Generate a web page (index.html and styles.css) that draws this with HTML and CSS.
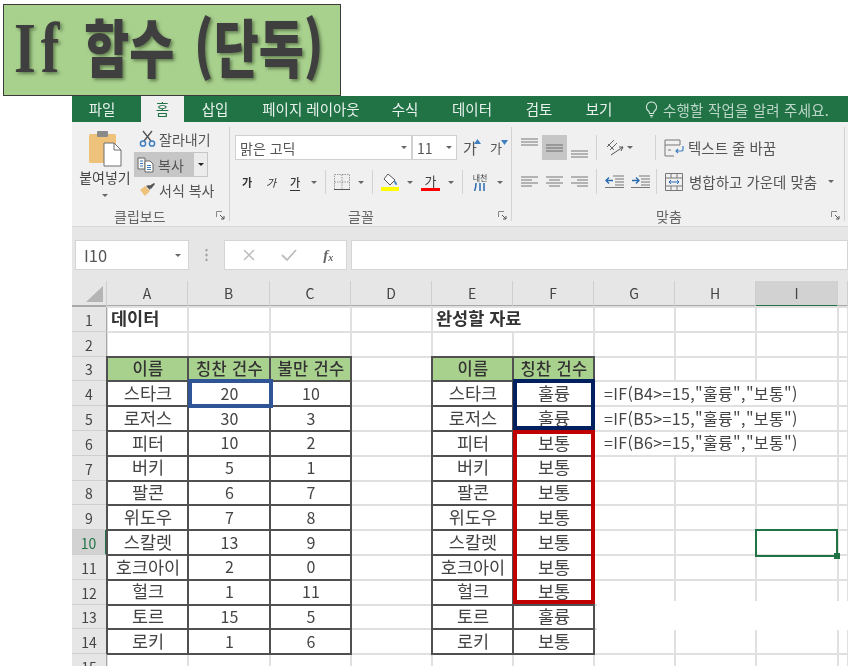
FILE: index.html
```html
<!DOCTYPE html>
<html lang="ko">
<head>
<meta charset="utf-8">
<title>If 함수 (단독)</title>
<link rel="stylesheet" href="styles.css">
</head>
<body>
<h1 class="title"><span class="title-text"><span class="title-if">If</span> 함수 (단독)</span></h1>
<main class="excel">
  <nav class="tabs">
    <span class="tab t-file">파일</span>
    <span class="tab t-home">홈</span>
    <span class="tab t-ins">삽입</span>
    <span class="tab t-page">페이지 레이아웃</span>
    <span class="tab t-form">수식</span>
    <span class="tab t-data">데이터</span>
    <span class="tab t-rev">검토</span>
    <span class="tab t-view">보기</span>
    <svg class="bulb" width="13" height="17" viewBox="0 0 13 17"><path d="M6.5 1a5 5 0 0 0-3 9c.7.6 1 1.4 1 2.5h4c0-1.1.3-1.900 1-2.500a5 5 0 0 0-3-9zM4.800 14.500h3.400M5.500 16h2" fill="none" stroke="#d6e6dc" stroke-width="1.100"/></svg>
    <span class="hint">수행할 작업을 알려 주세요.</span>
  </nav>

  <section class="ribbon">
    <div class="group g-clip">
      <div class="body clip-body">
        <div class="paste">
          <svg width="34" height="37" viewBox="0 0 34 37"><rect x="1" y="4" width="27" height="29" rx="1.500" fill="#eec27a"/><rect x="9" y="1" width="11" height="6" rx="1" fill="#8a8a8a"/><path d="M16 13h10l7 7v16H16z" fill="#fff" stroke="#6e6e6e"/><path d="M26 13v7h7" fill="none" stroke="#6e6e6e"/></svg>
          <span class="paste-label">붙여넣기</span>
          <i class="arrow"></i>
        </div>
        <div class="clip-list">
          <div class="clip-row">
            <svg width="17" height="17" viewBox="0 0 17 17"><path d="M4 1l8 10M13 1L5 11" stroke="#555" stroke-width="1.400" fill="none"/><circle cx="4" cy="13.500" r="2.600" fill="none" stroke="#3f7fc0" stroke-width="1.500"/><circle cx="13" cy="13.500" r="2.600" fill="none" stroke="#3f7fc0" stroke-width="1.500"/></svg>
            <span>잘라내기</span>
          </div>
          <div class="clip-row copy">
            <div class="copy-main">
              <svg width="18" height="16" viewBox="0 0 18 16"><path d="M1 1h7v11H1z" fill="#f4f4f4" stroke="#666"/><path d="M8 4h5l3 3v8H8z" fill="#fff" stroke="#666"/><path d="M3 4h3M3 6.500h3M3 9h3" stroke="#3f7fc0"/><path d="M10 8.500h4M10 10.500h4M10 12.500h4" stroke="#3f7fc0"/></svg>
              <span>복사</span>
            </div>
            <div class="copy-drop"><i class="arrow dark"></i></div>
          </div>
          <div class="clip-row">
            <svg width="17" height="15" viewBox="0 0 17 15"><path d="M1 8l5-4 5 5-5 5z" fill="#eec27a"/><path d="M7 4l3-1 2 2-1 3z" fill="#555"/><path d="M10 4l5-3 1 1-4 5z" fill="#555"/></svg>
            <span>서식 복사</span>
          </div>
        </div>
      </div>
      <footer class="foot foot-clip"><span></span><span>클립보드</span><svg class="launch" width="9" height="9" viewBox="0 0 9 9"><path d="M.5 6V.5H6" fill="none" stroke="#888"/><path d="M4 4l4 4M8 5v3H5" fill="none" stroke="#555"/></svg></footer>
    </div>
    <i class="gsep"></i>

    <div class="group g-font">
      <div class="body font-body">
        <div class="row font-row1">
          <div class="field fname"><span class="fname-text">맑은 고딕</span><i class="arrow"></i></div>
          <div class="field fsize"><span class="fsize-text">11</span><i class="arrow"></i></div>
          <span class="grow">가<svg class="caret" width="7" height="5" viewBox="0 0 7 5"><path d="M3.500 0L7 5H0z" fill="#3f7fc0"/></svg></span>
          <span class="grow small">가<svg class="caret" width="7" height="5" viewBox="0 0 7 5"><path d="M0 0h7L3.500 5z" fill="#3f7fc0"/></svg></span>
        </div>
        <div class="row font-row2">
          <b class="ga">가</b>
          <em class="ga">가</em>
          <u class="ga">가</u>
          <i class="arrow"></i>
          <i class="vsep"></i>
          <svg width="16" height="16" viewBox="0 0 16 16"><path d="M.5.500h15v15H.5z" fill="none" stroke="#999" stroke-dasharray="1.500 1"/><path d="M.5 8h15M8 .5v15" stroke="#999" stroke-dasharray="1.500 1"/><path d="M0 15.500h16" stroke="#555"/></svg>
          <i class="arrow"></i>
          <i class="vsep"></i>
          <svg width="18" height="18" viewBox="0 0 18 18"><path d="M7 1l7 6-5 5-6-6z" fill="#fff" stroke="#555"/><path d="M13 7c2 1 3 3 3 5-2 0-3-2-3-5z" fill="#3f7fc0"/><rect y="14" width="18" height="4" fill="#ffff00"/></svg>
          <i class="arrow"></i>
          <span class="fcolor">가<i class="redbar"></i></span>
          <i class="arrow"></i>
          <i class="vsep"></i>
          <span class="phon">내천<svg width="12" height="8" viewBox="0 0 12 8"><path d="M2 0c0 3-.5 6-1.500 8M6 0v8M10 0v8" fill="none" stroke="#2b6cb0" stroke-width="1.500"/></svg></span>
          <i class="arrow"></i>
        </div>
      </div>
      <footer class="foot foot-font"><span></span><span>글꼴</span><svg class="launch" width="9" height="9" viewBox="0 0 9 9"><path d="M.5 6V.5H6" fill="none" stroke="#888"/><path d="M4 4l4 4M8 5v3H5" fill="none" stroke="#555"/></svg></footer>
    </div>
    <i class="gsep"></i>

    <div class="group g-align">
      <div class="body align-body">
        <div class="row align-row1">
          <svg class="a-top" width="17" height="8" viewBox="0 0 17 8"><path d="M0 1h17M0 4h17M0 7h17" stroke="#777"/></svg>
          <span class="a-mid"><svg width="17" height="8" viewBox="0 0 17 8"><path d="M0 1h17M0 4h17M0 7h17" stroke="#6a6a6a"/></svg></span>
          <svg class="a-bot" width="17" height="8" viewBox="0 0 17 8"><path d="M0 1h17M0 4h17M0 7h17" stroke="#777"/></svg>
          <i class="vsep"></i>
          <svg class="orient" width="20" height="18" viewBox="0 0 20 18"><path d="M2 8l7-7M5 11l7-7M3 5l6 6" stroke="#666" fill="none"/><path d="M6 16l12-8M18 8l-4 0M18 8l-2 4" stroke="#555" fill="none"/></svg>
          <i class="arrow"></i>
          <i class="vsep sep-right"></i>
          <svg class="wrap-ico" width="20" height="18" viewBox="0 0 20 18"><path d="M1 1h15v5H1zM1 6v11h9M4 11h3" fill="none" stroke="#777"/><path d="M19 7v4c0 1-1 1-2 1h-5M14 10l-2 2 2 2" fill="none" stroke="#3f7fc0" stroke-width="1.200"/></svg>
          <span class="a-text">텍스트 줄 바꿈</span>
        </div>
        <div class="row align-row2">
          <svg width="17" height="12" viewBox="0 0 17 12"><path d="M0 1h17M0 4h11M0 7h17M0 10h11" stroke="#777"/></svg>
          <svg class="m8" width="17" height="12" viewBox="0 0 17 12"><path d="M0 1h17M3 4h11M0 7h17M3 10h11" stroke="#777"/></svg>
          <svg class="m8" width="17" height="12" viewBox="0 0 17 12"><path d="M0 1h17M6 4h11M0 7h17M6 10h11" stroke="#777"/></svg>
          <i class="vsep m8"></i>
          <svg class="m8" width="19" height="13" viewBox="0 0 19 13"><path d="M8 1h11M10 4h9M10 7h9M10 10h9M0 12.500h19" stroke="#777"/><path d="M8 5.500H1M4 2.500l-3 3 3 3" fill="none" stroke="#2b6cb0" stroke-width="1.400"/></svg>
          <svg class="m7" width="19" height="13" viewBox="0 0 19 13"><path d="M8 1h11M10 4h9M10 7h9M10 10h9M0 12.500h19" stroke="#777"/><path d="M1 5.500h7M5 2.500l3 3-3 3" fill="none" stroke="#2b6cb0" stroke-width="1.400"/></svg>
          <i class="vsep m6"></i>
          <svg class="m8" width="18" height="18" viewBox="0 0 18 18"><path d="M.5.500h17v17H.5zM.5 5h17M.5 13h17M6 .5V5M12 .5V5M6 13v4.500M12 13v4.500" fill="none" stroke="#777"/><path d="M4 9h10M6 7L4 9l2 2M12 7l2 2-2 2" fill="none" stroke="#2b6cb0"/></svg>
          <span class="a-text merge">병합하고 가운데 맞춤</span>
          <i class="arrow merge-arrow"></i>
        </div>
      </div>
      <footer class="foot foot-align"><span></span><span>맞춤</span><svg class="launch" width="9" height="9" viewBox="0 0 9 9"><path d="M.5 6V.5H6" fill="none" stroke="#888"/><path d="M4 4l4 4M8 5v3H5" fill="none" stroke="#555"/></svg></footer>
    </div>
    <i class="gsep"></i>
  </section>

  <section class="fbar">
    <div class="namebox"><span>I10</span><i class="arrow"></i></div>
    <div class="dots"></div>
    <div class="fbtns">
      <svg width="14" height="14" viewBox="0 0 14 14"><path d="M2 2l10 10M12 2L2 12" stroke="#bdbdbd" stroke-width="1.500"/></svg>
      <svg width="16" height="14" viewBox="0 0 16 14"><path d="M1 7l5 5L15 2" fill="none" stroke="#bdbdbd" stroke-width="1.800"/></svg>
      <span class="fx">f<sub>x</sub></span>
    </div>
    <div class="finput"></div>
  </section>

  <section class="sheet">
    <div class="hd corner"><svg width="17" height="16" viewBox="0 0 17 16"><path d="M17 0v16H0z" fill="#b4b4b4"/></svg></div><div class="hd">A</div><div class="hd">B</div><div class="hd">C</div><div class="hd">D</div><div class="hd">E</div><div class="hd">F</div><div class="hd">G</div><div class="hd">H</div><div class="hd sel-col">I</div><div class="hd"></div>

    <div class="rn">1</div><div class="c hb">데이터</div><div class="c"></div><div class="c"></div><div class="c"></div><div class="c hb span2">완성할 자료</div><div class="c"></div><div class="c"></div><div class="c"></div><div class="c"></div>

    <div class="rn">2</div><div class="c"></div><div class="c"></div><div class="c"></div><div class="c"></div><div class="c"></div><div class="c"></div><div class="c"></div><div class="c"></div><div class="c"></div><div class="c"></div>

    <div class="rn">3</div><div class="c t th">이름</div><div class="c t th">칭찬 건수</div><div class="c t th">불만 건수</div><div class="c"></div><div class="c t th">이름</div><div class="c t th">칭찬 건수</div><div class="c"></div><div class="c"></div><div class="c"></div><div class="c"></div>

    <div class="rn">4</div><div class="c t">스타크</div><div class="c t n">20</div><div class="c t n">10</div><div class="c"></div><div class="c t">스타크</div><div class="c t">훌륭</div><div class="c fm">=IF(B4&gt;=15,"훌륭","보통")</div><div class="c"></div>

    <div class="rn">5</div><div class="c t">로저스</div><div class="c t n">30</div><div class="c t n">3</div><div class="c"></div><div class="c t">로저스</div><div class="c t">훌륭</div><div class="c fm">=IF(B5&gt;=15,"훌륭","보통")</div><div class="c"></div>

    <div class="rn">6</div><div class="c t">피터</div><div class="c t n">10</div><div class="c t n">2</div><div class="c"></div><div class="c t">피터</div><div class="c t">보통</div><div class="c fm">=IF(B6&gt;=15,"훌륭","보통")</div><div class="c"></div>

    <div class="rn">7</div><div class="c t">버키</div><div class="c t n">5</div><div class="c t n">1</div><div class="c"></div><div class="c t">버키</div><div class="c t">보통</div><div class="c"></div><div class="c"></div><div class="c"></div><div class="c"></div>

    <div class="rn">8</div><div class="c t">팔콘</div><div class="c t n">6</div><div class="c t n">7</div><div class="c"></div><div class="c t">팔콘</div><div class="c t">보통</div><div class="c"></div><div class="c"></div><div class="c"></div><div class="c"></div>

    <div class="rn">9</div><div class="c t">위도우</div><div class="c t n">7</div><div class="c t n">8</div><div class="c"></div><div class="c t">위도우</div><div class="c t">보통</div><div class="c"></div><div class="c"></div><div class="c"></div><div class="c"></div>

    <div class="rn sel-row">10</div><div class="c t">스칼렛</div><div class="c t n">13</div><div class="c t n">9</div><div class="c"></div><div class="c t">스칼렛</div><div class="c t">보통</div><div class="c"></div><div class="c"></div><div class="c"></div><div class="c"></div>

    <div class="rn">11</div><div class="c t">호크아이</div><div class="c t n">2</div><div class="c t n">0</div><div class="c"></div><div class="c t">호크아이</div><div class="c t">보통</div><div class="c"></div><div class="c"></div><div class="c"></div><div class="c"></div>

    <div class="rn">12</div><div class="c t">헐크</div><div class="c t n">1</div><div class="c t n">11</div><div class="c"></div><div class="c t">헐크</div><div class="c t">보통</div><div class="c"></div><div class="c"></div><div class="c"></div><div class="c"></div>

    <div class="rn">13</div><div class="c t">토르</div><div class="c t n">15</div><div class="c t n">5</div><div class="c"></div><div class="c t">토르</div><div class="c t">훌륭</div><div class="c"></div><div class="c"></div><div class="c"></div><div class="c"></div>

    <div class="rn">14</div><div class="c t">로키</div><div class="c t n">1</div><div class="c t n">6</div><div class="c"></div><div class="c t">로키</div><div class="c t">보통</div><div class="c"></div><div class="c"></div><div class="c"></div><div class="c"></div>

    <div class="rn">15</div><div class="c"></div><div class="c"></div><div class="c"></div><div class="c"></div><div class="c"></div><div class="c"></div><div class="c"></div><div class="c"></div><div class="c"></div><div class="c"></div>

    <div class="mark mark-blue"></div>
    <div class="mark mark-navy"></div>
    <div class="mark mark-red"></div>
    <div class="mark mark-sel"><i class="handle"></i></div>
    <div class="mark patch"></div>
  </section>
</main>
</body>
</html>
```

FILE: styles.css
```css
* { box-sizing: border-box; }
html, body { margin: 0; padding: 0; background: #fff; }
body {
  width: 855px;
  height: 669px;
  overflow: hidden;
  font-family: "Noto Sans CJK KR", "Noto Sans", sans-serif;
  color: #444;
}

/* title */
.title {
  margin: 4px 0 0 3px;
  width: 338px;
  height: 92px;
  background: #a9d18e;
  border: 1px solid #3a3a3a;
  color: #3f3f3f;
  font-size: 49px;
  font-weight: 900;
  line-height: 80px;
  padding-left: 10px;
  white-space: nowrap;
  word-spacing: 6px;
  filter: blur(.6px);
}
.title-text {
  display: inline-block;
  transform: scaleY(1.28);
  transform-origin: 50% 50%;
  text-shadow: 2px 2px 3px rgba(40, 60, 30, .55);
}
.title-if { font-family: "Liberation Serif", serif; font-weight: 700; font-size: 56px; letter-spacing: 5px; }

.excel {
  margin-left: 72px;
  width: 776px;
  filter: blur(.45px);
  font-size: 14px;
}

/* tabs */
.tabs {
  display: flex;
  align-items: center;
  height: 26px;
  background: #217346;
  color: #e8f1ec;
  font-size: 14.500px;
  white-space: nowrap;
}
.tab { text-align: center; line-height: 26px; height: 26px; }
.t-file { width: 69px; padding-right: 9px; }
.t-home { width: 43px; background: #f0f0f0; color: #217346; }
.t-ins { width: 62px; }
.t-page { width: 130px; }
.t-form { width: 60px; padding-right: 2px; }
.t-data { width: 72px; }
.t-rev { width: 62px; }
.t-view { width: 58px; }
.bulb { margin-left: 17px; }
.hint { margin-left: 5px; color: #bcd6c8; font-size: 14.500px; letter-spacing: .2px; }

/* ribbon */
.ribbon {
  display: flex;
  height: 105px;
  background: #f0f0f0;
  border-bottom: 1px solid #d9d9d9;
}
.group { display: flex; flex-direction: column; }
.g-clip { width: 157px; }
.g-font { width: 281px; }
.g-align { width: 332px; }
.gsep { width: 1px; margin: 5px 0; background: #d2d2d2; }
.body { flex: 1; }
.foot {
  display: grid;
  align-items: center;
  height: 21px;
  color: #666;
  font-size: 14px;
}
.foot-clip { grid-template-columns: 42px auto 1fr; }
.foot-font { grid-template-columns: 118px auto 1fr; }
.foot-align { grid-template-columns: 144px auto 1fr; }
.launch { justify-self: end; margin-right: 4px; }
.arrow {
  display: inline-block;
  width: 0;
  height: 0;
  border: 3px solid transparent;
  border-top: 3px solid #666;
  border-bottom: 0;
  flex: none;
}
.arrow.dark { border-top-color: #222; }
.vsep { display: block; width: 1px; height: 25px; background: #d2d2d2; flex: none; }
.row { display: flex; align-items: center; }

/* clipboard */
.clip-body { display: flex; padding: 4px 0 0 4px; }
.paste { width: 58px; display: flex; flex-direction: column; align-items: center; }
.paste svg { margin: 4px 0 0 0; }
.paste-label { margin-top: -1px; line-height: 22px; font-size: 14px; white-space: nowrap; }
.paste .arrow { margin-top: 6px; }
.clip-list { display: flex; flex-direction: column; }
.clip-row { display: flex; align-items: center; gap: 3px; height: 25px; width: 82px; padding-left: 5px; white-space: nowrap; color: #555; }
.copy { padding: 0; gap: 0; width: 74px; margin-top: 1px; background: #f0f0f0; }
.copy-main { display: flex; align-items: center; gap: 3px; width: 59px; height: 25px; padding-left: 3px; background: #c6c6c6; }
.copy-drop { display: flex; align-items: center; justify-content: center; width: 15px; height: 25px; border: 1px solid #c6c6c6; background: #ececec; }

/* font */
.font-body { padding: 13px 0 0 5px; }
.field {
  display: flex;
  align-items: center;
  justify-content: space-between;
  height: 25px;
  background: #fff;
  border: 1px solid #d0d0d0;
  font-size: 14px;
  padding: 0 4px;
}
.fname { width: 177px; }
.fname-text, .fsize-text { color: #555; }
.fsize { width: 45px; }
.grow { position: relative; margin-left: 6px; width: 20px; font-size: 15px; color: #555; text-align: left; }
.grow.small { margin-left: 7px; font-size: 13px; }
.caret { position: absolute; left: 11px; top: 2px; }
.font-row2 { margin: 10px 0 0 4px; width: 264px; justify-content: space-between; height: 24px; }
.font-row2 .vsep { height: 24px; }
.ga { width: 16px; text-align: center; font-size: 11px; color: #333; }
b.ga { font-weight: 700; }
em.ga { font-style: italic; }
u.ga { font-weight: 500; text-underline-offset: 3px; }
.fcolor { position: relative; width: 19px; height: 18px; text-align: center; font-size: 13px; line-height: 15px; color: #444; }
.redbar { position: absolute; left: 0; bottom: 0; width: 19px; height: 3px; background: #f00; }
.phon { display: flex; flex-direction: column; align-items: center; width: 18px; font-size: 8px; line-height: 10px; color: #444; }

/* alignment */
.align-body { padding: 13px 0 0 9px; }
.align-row1 { height: 25px; }
.align-row2 { height: 25px; margin-top: 9px; }
.a-top { align-self: flex-start; margin-top: 3px; }
.a-mid { display: flex; align-items: center; justify-content: center; width: 25px; height: 25px; margin-left: 4px; background: #c6c6c6; }
.a-bot { align-self: flex-end; margin: 0 0 2px 4px; }
.align-row1 .vsep { margin-left: 8px; }
.orient { margin-left: 8px; }
.align-row1 .arrow { margin-left: 2px; }
.align-row1 .sep-right { margin-left: 22px; }
.wrap-ico { margin-left: 8px; }
.a-text { margin-left: 4px; font-size: 14.500px; color: #555; white-space: nowrap; }
.m8 { margin-left: 8px; }
.m7 { margin-left: 7px; }
.m6 { margin-left: 6px; }
.merge { margin-left: 6px; }
.merge-arrow { margin-left: 11px; }

/* formula bar */
.fbar {
  display: flex;
  align-items: flex-start;
  height: 54px;
  padding: 13px 0 0 3px;
  background: #e6e6e6;
}
.namebox {
  display: flex;
  align-items: center;
  justify-content: space-between;
  width: 114px;
  height: 30px;
  padding: 0 7px 0 8px;
  background: #fff;
  border: 1px solid #d5d5d5;
  font-size: 16.500px;
  color: #555;
}
.dots {
  width: 35px;
  height: 30px;
  background: radial-gradient(circle, #a0a0a0 1px, transparent 1.2px) center / 3px 5px repeat-y;
  clip-path: inset(9px 0);
}
.fbtns {
  display: flex;
  align-items: center;
  justify-content: space-around;
  width: 123px;
  height: 30px;
  background: #fff;
  border: 1px solid #d5d5d5;
  padding-left: 4px;
}
.fx { font-family: "Liberation Serif", serif; font-style: italic; font-weight: 700; font-size: 15px; color: #666; }
.fx sub { font-size: 10px; vertical-align: -1px; }
.finput { flex: 1; height: 30px; margin-left: 4px; background: #fff; border: 1px solid #d5d5d5; }

/* sheet */
.sheet {
  position: relative;
  display: grid;
  height: 385px;
  overflow: hidden;
  grid-template-columns: 35px 81px 82px 81px 81px 81px 81px 81px 81px 82px 10px;
  grid-template-rows: 26px repeat(14, 24.8px) 24.8px;
  background: #fff;
}
.hd {
  display: flex;
  align-items: center;
  justify-content: center;
  background: #e6e6e6;
  border-right: 1px solid #cfcfcf;
  border-bottom: 2px solid #a8a8a8;
  font-size: 14px;
  color: #444;
}
.corner { justify-content: flex-end; align-items: flex-end; padding: 0 3px 3px 0; }
.sel-col { background: #d2d2d2; border-bottom-color: #217346; }
.rn {
  display: flex;
  align-items: center;
  justify-content: center;
  background: #e6e6e6;
  border-bottom: 1px solid #cfcfcf;
  border-right: 1px solid #a8a8a8;
  font-size: 14px;
  color: #444;
  padding-top: 2px;
  z-index: 1;
}
.sel-row { background: #d2d2d2; color: #217346; border-right: 2px solid #217346; }
.c {
  display: flex;
  align-items: center;
  justify-content: center;
  min-width: 0;
  outline: 2px solid #e0e0e0;
  outline-offset: -1px;
  padding: 0 0 2px 1px;
  font-size: 17.500px;
  color: #444;
  white-space: nowrap;
  line-height: 1;
}
.t { outline: 2px solid #505050; z-index: 1; }
.n { font-size: 16px; }
.th { background: #a9d18e; font-weight: 500; font-size: 16.500px; color: #333; letter-spacing: .3px; }
.hb { justify-content: flex-start; padding: 0 0 4px 4px; font-weight: 700; font-size: 17.500px; color: #333; }
.span2 { grid-column: span 2; }
.fm { grid-column: span 3; justify-content: flex-start; padding-left: 10px; font-size: 16px; color: #444; letter-spacing: .35px; }

.mark { position: absolute; z-index: 2; }
.mark-blue { left: 116px; top: 98px; width: 85px; height: 29px; border: 4px solid #2f5597; }
.mark-navy { left: 441px; top: 98px; width: 82px; height: 51px; border: 4px solid #002060; }
.mark-red { left: 441px; top: 149px; width: 82px; height: 174px; border: 4px solid #c00000; }
.mark-sel { left: 683px; top: 248px; width: 83px; height: 28px; border: 2px solid #217346; }
.handle { position: absolute; right: -4px; bottom: -4px; width: 6px; height: 6px; background: #217346; }
.patch { left: 525px; top: 320px; width: 251px; height: 29px; background: #fff; }
```
